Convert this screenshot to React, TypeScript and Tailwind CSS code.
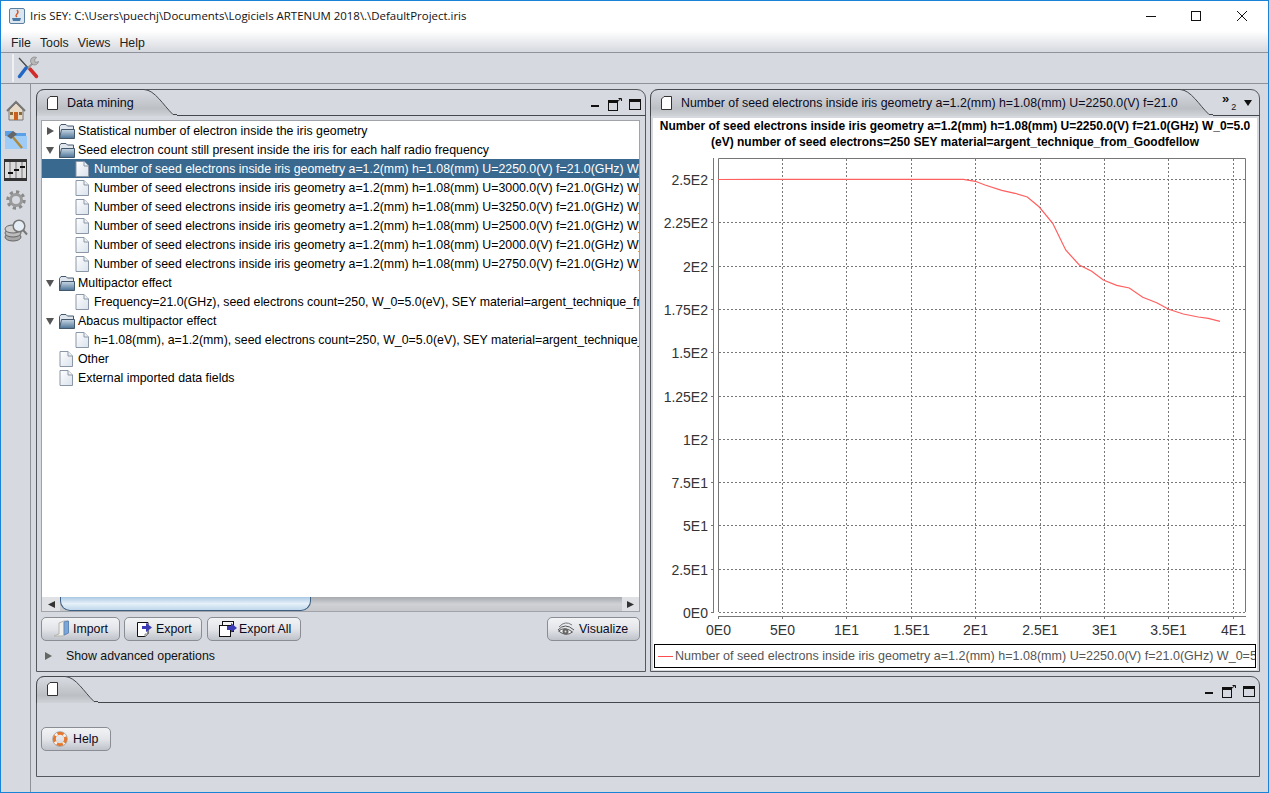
import React from "react";

const sans = { fontFamily: '"Liberation Sans", Arial, sans-serif' };

function DocIcon() {
  return (
    <svg width="14" height="16" viewBox="0 0 14 16" className="shrink-0">
      <defs>
        <linearGradient id="dg" x1="0" y1="0" x2="1" y2="1">
          <stop offset="0" stopColor="#ffffff" />
          <stop offset="1" stopColor="#d9e2ec" />
        </linearGradient>
      </defs>
      <path d="M1 .5H9L13.5 5V15.5H1Z" fill="url(#dg)" stroke="#8b97a6" />
      <path d="M9 .5V5H13.5" fill="#eef2f6" stroke="#8b97a6" />
    </svg>
  );
}

function TabDoc() {
  return (
    <svg width="11" height="14" viewBox="0 0 11 14" className="shrink-0">
      <path d="M3 .5H10.5V13.5H.5V3Z" fill="#fff" stroke="#333" />
    </svg>
  );
}

function Folder() {
  return (
    <svg width="17" height="15" viewBox="0 0 17 15" className="shrink-0">
      <defs>
        <linearGradient id="fg" x1="0" y1="0" x2="0" y2="1">
          <stop offset="0" stopColor="#c9d8e6" />
          <stop offset="1" stopColor="#4c7396" />
        </linearGradient>
      </defs>
      <path d="M1.5 14.5V2.5L3 .5H8L9.5 2H15.5V14.5Z" fill="#dfe6ee" stroke="#44586c" />
      <path d="M1.5 14.5L3.5 5.5H16.5V14.5Z" fill="url(#fg)" stroke="#44586c" />
    </svg>
  );
}

function Tri({ open = false, gray = false }: { open?: boolean; gray?: boolean }) {
  return (
    <svg width="8" height="8" viewBox="0 0 8 8" className="shrink-0">
      {open ? <path d="M0 1H8L4 8Z" fill="#555" /> : <path d="M1 0L8 4L1 8Z" fill={gray ? "#666" : "#555"} />}
    </svg>
  );
}

function Row({ indent, children, selected = false }: { indent: "leaf" | "plain"; children: string; selected?: boolean }) {
  return (
    <div
      className={`h-[19px] pt-[1px] flex items-center whitespace-nowrap overflow-hidden text-[12.35px] ${
        selected ? "bg-[#39698f] text-white" : "text-black"
      } ${indent === "leaf" ? "pl-[33px] gap-[5px]" : "pl-[17px] gap-[5px]"}`}
    >
      <DocIcon />
      <span>{children}</span>
    </div>
  );
}

function FolderRow({ open = false, children }: { open?: boolean; children: string }) {
  return (
    <div className="h-[19px] pt-[1px] flex items-center whitespace-nowrap overflow-hidden text-[12.35px] text-black pl-[4px]">
      <Tri open={open} />
      <span className="ml-[4px] mr-[3px] flex"><Folder /></span>
      <span>{children}</span>
    </div>
  );
}

function TabShape({ w }: { w: number }) {
  const h = 27;
  return (
    <svg width={w} height={h} viewBox={`0 0 ${w} ${h}`} className="absolute left-0 top-0">
      <defs>
        <linearGradient id="tab" x1="0" y1="0" x2="0" y2="1">
          <stop offset="0" stopColor="#d8dbe1" />
          <stop offset="0.72" stopColor="#bcbfc4" />
          <stop offset="1" stopColor="#d0d3d8" />
        </linearGradient>
      </defs>
      <path
        d={`M0 ${h}V9Q0 1 8 .5H${w - 33}C${w - 22} 1 ${w - 14} 16 ${w - 4} ${h - 1.5}H${w}V${h}H0Z`}
        fill="url(#tab)"
      />
      <path
        d={`M.5 ${h}V9Q.5 1 8 .5H${w - 33}C${w - 22} 1 ${w - 14} 16 ${w - 4} ${h - 1.5}H${w}`}
        fill="none"
        stroke="#44484c"
      />
    </svg>
  );
}

function WinButtons() {
  return (
    <div className="flex items-center">
      <svg width="9" height="13" viewBox="0 0 9 13"><rect x="0" y="7" width="8" height="2" fill="#111" /></svg>
      <svg width="14" height="13" viewBox="0 0 14 13" className="ml-[8px]">
        <rect x=".5" y="2.5" width="9" height="10" fill="none" stroke="#111" />
        <rect x="0" y="2" width="10" height="3" fill="#111" />
        <path d="M9 4L13 .5M10.5 .5H13.5V3" fill="none" stroke="#111" />
      </svg>
      <svg width="12" height="11" viewBox="0 0 12 11" className="ml-[7px]">
        <rect x=".5" y=".5" width="11" height="10" fill="#d6d9df" stroke="#111" />
        <rect x="0" y="0" width="12" height="3" fill="#111" />
      </svg>
    </div>
  );
}

function Btn({ icon, label, cls }: { icon: React.ReactNode; label: string; cls: string }) {
  return (
    <button
      style={sans}
      className={`h-[24px] flex items-center justify-start rounded-[5px] border border-[#8a8d93] bg-gradient-to-b from-[#f2f3f5] via-[#e3e5e9] to-[#bfc3ca] text-[12.35px] text-[#0a0a20] ${cls}`}
    >
      {icon}
      <span>{label}</span>
    </button>
  );
}

const ImportIcon = (
  <svg width="18" height="18" viewBox="0 0 18 18" className="mr-[2px] shrink-0">
    <path d="M1 16L6 14V3L11 1H15V13L10 16Z" fill="#f0efea" stroke="#b5b5b0" />
    <path d="M11 2L15.5 1V13L11 15Z" fill="#7ba6d8" stroke="#5f87b8" />
  </svg>
);
const ExportIcon = (
  <svg width="18" height="18" viewBox="0 0 18 18" className="mr-[2px] shrink-0">
    <path d="M1.5 2.5H12V14L9 16.5H1.5Z" fill="#fff" stroke="#111" />
    <path d="M9 16.5V14H12" fill="#ddd" stroke="#888" />
    <path d="M6 6H10V3L16 7.5L10 12V9H6Z" fill="#3b3bb5" />
  </svg>
);
const ExportAllIcon = (
  <svg width="20" height="18" viewBox="0 0 20 18" className="mr-[1px] shrink-0">
    <rect x="4.5" y="1.5" width="11" height="10" fill="#f4f4f4" stroke="#111" />
    <rect x="1.5" y="5.5" width="11" height="11" fill="#fff" stroke="#111" />
    <path d="M9 6H13V3L19 8L13 12.5V10H9Z" fill="#3b3bb5" />
  </svg>
);
const EyeIcon = (
  <svg width="18" height="16" viewBox="0 0 18 16" className="mr-[4px] shrink-0">
    <path d="M1 9Q8 1 17 9" fill="none" stroke="#555" />
    <path d="M2 6Q8 -1 15 4" fill="none" stroke="#777" />
    <path d="M1.5 10Q8 5 15.5 11Q9 16 1.5 10Z" fill="#f4f4f4" stroke="#555" />
    <circle cx="8.5" cy="10.5" r="3" fill="#666" />
    <circle cx="8.5" cy="10.5" r="1" fill="#ddd" />
  </svg>
);
const BuoyIcon = (
  <svg width="16" height="16" viewBox="0 0 16 16" className="mr-[5px] shrink-0">
    <circle cx="8" cy="8" r="5.7" fill="none" stroke="#e9772a" strokeWidth="3" />
    <circle cx="8" cy="8" r="5.7" fill="none" stroke="#f7efe8" strokeWidth="3" strokeDasharray="3 5.95" strokeDashoffset="1.5" transform="rotate(45 8 8)" />
    <circle cx="8" cy="8" r="7.4" fill="none" stroke="#8f8f8f" strokeWidth=".6" />
  </svg>
);

const xTicks = ["0E0", "5E0", "1E1", "1.5E1", "2E1", "2.5E1", "3E1", "3.5E1", "4E1"];
const yTicks = ["0E0", "2.5E1", "5E1", "7.5E1", "1E2", "1.25E2", "1.5E2", "1.75E2", "2E2", "2.25E2", "2.5E2"];
const curve = [
  [70, 58], [106, 64], [135, 75], [185, 91], [225, 100], [262, 111], [298, 141], [338, 190], [377, 270], [418, 315],
  [455, 334], [490, 360], [530, 376], [568, 384], [608, 412], [650, 428], [686, 448], [730, 462], [775, 471], [805, 475], [840, 484],
];
const curvePts =
  "718,179.5 " + curve.map(([x, y]) => `${(940 + x / 3).toFixed(1)},${(160 + y / 3).toFixed(1)}`).join(" ");

function Chart() {
  return (
    <svg width="602" height="494" viewBox="654 150 602 494" className="block shrink-0" style={sans}>
      <path d="M718.5 612V158.5H1245.5V612" fill="none" stroke="#777" />
      {xTicks.map((t, i) => {
        const x = Math.round(717.5 + i * 64.4) + 0.5;
        return (
          <g key={t}>
            {i > 0 && <line x1={x} x2={x} y1={159} y2={612} stroke="#777" strokeDasharray="2 2" />}
            <line x1={x} x2={x} y1={616} y2={619} stroke="#777" />
            <text x={x} y={635} textAnchor="middle" fontSize="14" fill="#333">{t}</text>
          </g>
        );
      })}
      {yTicks.map((t, i) => {
        const y = Math.round(612 - i * 43.3) + 0.5;
        return (
          <g key={t}>
            <line x1={719} x2={1245} y1={y} y2={y} stroke="#777" strokeDasharray="2 2" />
            <line x1={711} x2={714} y1={y} y2={y} stroke="#777" />
            <text x={708} y={y + 5} textAnchor="end" fontSize="14" fill="#333">{t}</text>
          </g>
        );
      })}
      <line x1="713.5" x2="713.5" y1="158" y2="613" stroke="#777" />
      <line x1="718" x2="1246" y1="616.5" y2="616.5" stroke="#777" />
      <polyline points={curvePts} fill="none" stroke="#ff5f5f" strokeWidth="1.2" />
    </svg>
  );
}

const seed = (u: string) =>
  `Number of seed electrons inside iris geometry a=1.2(mm) h=1.08(mm) U=${u}(V) f=21.0(GHz) W_0=5.0(eV) number of seed electrons=250`;

const TabLine = ({ left }: { left: string }) => <div className={`absolute ${left} right-0 top-[26px] h-px bg-[#44484c]`} />;

export default function App() {
  return (
    <div
      style={sans}
      className="w-[1269px] h-[793px] overflow-hidden flex flex-col bg-[#d6d9df] border border-[#1883d7] text-black"
    >
      {/* Title bar */}
      <div className="h-[30px] shrink-0 bg-white flex items-center pl-[8px]" style={{ fontFamily: '"Open Sans", sans-serif' }}>
        <svg width="16" height="16" viewBox="0 0 16 16" className="shrink-0">
          <rect x=".5" y=".5" width="15" height="15" rx="1.5" fill="#dbe6f0" stroke="#5c7f9f" />
          <path d="M8 2Q10 4 8 6T8 9" fill="none" stroke="#d9531e" strokeWidth="1.3" />
          <path d="M3 10H12L11 13H4Z" fill="#4a7ba8" />
        </svg>
        <span className="ml-[5px] text-[11.45px] text-[#111] whitespace-nowrap">
          Iris SEY: C:\Users\puechj\Documents\Logiciels ARTENUM 2018\.\DefaultProject.iris
        </span>
        <div className="ml-auto flex items-center text-black mr-[3px]">
          <svg width="46" height="30" viewBox="0 0 46 30"><path d="M19 15.5H29" stroke="#111" /></svg>
          <svg width="46" height="30" viewBox="0 0 46 30"><rect x="18.5" y="10.5" width="9" height="9" fill="none" stroke="#111" /></svg>
          <svg width="46" height="30" viewBox="0 0 46 30"><path d="M18 10L28 20M28 10L18 20" stroke="#111" /></svg>
        </div>
      </div>
      {/* Menu */}
      <div className="h-[22px] shrink-0 bg-gradient-to-b from-white to-[#d6d9df] border-b border-[#8f9399] flex items-center pl-[10px] pt-[3px] gap-[9px] text-[12.35px] text-[#222]">
        <span>File</span><span>Tools</span><span>Views</span><span>Help</span>
      </div>
      {/* Toolbar */}
      <div className="h-[31px] shrink-0 border-b border-[#8f9399] flex items-center pl-[11px]">
        <div className="w-[2px] h-[28px] bg-[#eef0f3]" />
        <svg width="24" height="24" viewBox="0 0 24 24" className="ml-[2px]">
          <path d="M3 2L14 14" stroke="#444" strokeWidth="1.2" />
          <path d="M14 13L20.5 20.5" stroke="#d12b2b" strokeWidth="3.5" strokeLinecap="round" />
          <path d="M18 6L11 13" stroke="#999" strokeWidth="2" />
          <path d="M10 12L3.5 20.5" stroke="#2368c4" strokeWidth="3.5" strokeLinecap="round" />
          <path d="M20.5 1.5A4 4 0 1 0 22.5 5.5L19.5 6.5L18.5 4Z" fill="#b8b8b8" stroke="#777" strokeWidth=".6" />
        </svg>
      </div>
      {/* Body */}
      <div className="flex-1 flex min-h-0">
        {/* Sidebar */}
        <div className="w-[30px] shrink-0 border-r border-[#8f9399] flex flex-col items-center pt-[11px]">
          <div className="h-[30px] flex items-center justify-center">
            <svg width="20" height="21" viewBox="0 0 20 21">
              <path d="M3 10V20H17V10L10 3Z" fill="#e8dcc8" stroke="#777" />
              <path d="M1 11L10 2L19 11" fill="none" stroke="#777" strokeWidth="2" />
              <rect x="8" y="12" width="4" height="8" fill="#c9601e" />
              <rect x="4" y="12" width="3" height="3" fill="#8a6a3a" />
              <rect x="13" y="12" width="3" height="3" fill="#8a6a3a" />
            </svg>
          </div>
          <div className="h-[30px] flex items-center justify-center">
            <svg width="24" height="22" viewBox="0 0 24 22">
              <path d="M1 2H9L11 4H22V19H1Z" fill="#5aa0e8" />
              <path d="M1 7H23V20H1Z" fill="#9fccf7" />
              <path d="M8 7L18 19" stroke="#b08a3c" strokeWidth="2.5" />
              <path d="M3 7L9 2L13 5L7 10Z" fill="#666" />
            </svg>
          </div>
          <div className="h-[30px] flex items-center justify-center">
            <svg width="23" height="22" viewBox="0 0 23 22">
              <rect x=".5" y=".5" width="22" height="21" fill="#dcdcdc" stroke="#333" />
              <rect x="0" y="0" width="23" height="3" fill="#333" />
              <rect x="0" y="19" width="23" height="3" fill="#333" />
              <path d="M6 3V19M12 3V19M18 3V19" stroke="#777" />
              <rect x="4" y="13" width="5" height="2" fill="#111" />
              <rect x="10" y="10" width="5" height="2" fill="#111" />
              <rect x="16" y="7" width="5" height="2" fill="#111" />
            </svg>
          </div>
          <div className="h-[30px] flex items-center justify-center">
            <svg width="20" height="20" viewBox="0 0 20 20">
              <circle cx="10" cy="10" r="5.5" fill="none" stroke="#9a9a9a" strokeWidth="3" />
              <circle cx="10" cy="10" r="8.2" fill="none" stroke="#8a8a8a" strokeWidth="3" strokeDasharray="3.2 3.2" />
            </svg>
          </div>
          <div className="h-[30px] flex items-center justify-center">
            <svg width="24" height="23" viewBox="0 0 24 23">
              <ellipse cx="9" cy="18" rx="8" ry="4" fill="#a8a8a8" stroke="#666" />
              <ellipse cx="9" cy="14" rx="8" ry="4" fill="#bdbdbd" stroke="#666" />
              <ellipse cx="9" cy="10" rx="8" ry="4" fill="#d0d0d0" stroke="#666" />
              <circle cx="15" cy="7" r="5.8" fill="#e6eef5" stroke="#777" strokeWidth="1.5" />
              <path d="M19 11L23 15.5" stroke="#777" strokeWidth="2" />
            </svg>
          </div>
        </div>
        {/* Content */}
        <div className="flex-1 min-w-0 flex flex-col pl-[5px] pr-[8px] pt-[5px] pb-[15px] gap-[4px]">
          <div className="h-[583px] shrink-0 flex gap-[4px]">
            {/* Left panel */}
            <section className="w-[610px] shrink-0 relative flex flex-col border border-[#55595e] rounded-t-[9px]">
              <div className="h-[31px] shrink-0 relative -mx-[1px] -mt-[1px]">
                <TabShape w={141} />
                <TabLine left="left-[141px]" />
                <div className="relative h-[28px] flex items-center pl-[11px] gap-[9px] text-[12.5px] text-[#0a0a20]">
                  <TabDoc />
                  <span>Data mining</span>
                </div>
                <div className="absolute right-[5px] top-[9px]"><WinButtons /></div>
              </div>
              <div className="ml-[4px] mr-[5px] h-[477px] shrink-0 bg-white border-x border-t border-[#a0a4aa] overflow-hidden">
                <FolderRow>Statistical number of electron inside the iris geometry</FolderRow>
                <FolderRow open>Seed electron count still present inside the iris for each half radio frequency</FolderRow>
                <Row indent="leaf" selected>{seed("2250.0")}</Row>
                <Row indent="leaf">{seed("3000.0")}</Row>
                <Row indent="leaf">{seed("3250.0")}</Row>
                <Row indent="leaf">{seed("2500.0")}</Row>
                <Row indent="leaf">{seed("2000.0")}</Row>
                <Row indent="leaf">{seed("2750.0")}</Row>
                <FolderRow open>Multipactor effect</FolderRow>
                <Row indent="leaf">Frequency=21.0(GHz), seed electrons count=250, W_0=5.0(eV), SEY material=argent_technique_from_Goodfellow</Row>
                <FolderRow open>Abacus multipactor effect</FolderRow>
                <Row indent="leaf">h=1.08(mm), a=1.2(mm), seed electrons count=250, W_0=5.0(eV), SEY material=argent_technique_from_Goodfellow</Row>
                <Row indent="plain">Other</Row>
                <Row indent="plain">External imported data fields</Row>
              </div>
              {/* Scrollbar */}
              <div className="ml-[4px] mr-[5px] h-[15px] shrink-0 flex bg-gradient-to-b from-[#a6a9ae] via-[#cfd1d5] to-[#c6c8cc] border-x border-b border-[#a0a4aa]">
                <div className="w-[18px] shrink-0 flex items-center justify-center bg-[#dfe1e5]">
                  <svg width="7" height="7" viewBox="0 0 7 7"><path d="M7 0V7L0 3.5Z" fill="#333" /></svg>
                </div>
                <div className="w-[251px] shrink-0 rounded-b-[10px] border-x border-b border-[#3f5f80] bg-gradient-to-b from-[#a9c8e4] via-[#e6f0f8] to-[#c0d8ec]" />
                <div className="flex-1" />
                <div className="w-[17px] shrink-0 flex items-center justify-center bg-[#dfe1e5]">
                  <svg width="7" height="7" viewBox="0 0 7 7"><path d="M0 0V7L7 3.5Z" fill="#333" /></svg>
                </div>
              </div>
              <div className="ml-[4px] mr-[5px] mt-[5px] flex gap-[4px]">
                <Btn icon={ImportIcon} label="Import" cls="w-[79px] pl-[11px]" />
                <Btn icon={ExportIcon} label="Export" cls="w-[78px] pl-[11px]" />
                <Btn icon={ExportAllIcon} label="Export All" cls="w-[94px] ml-[1px] pl-[10px]" />
                <Btn icon={EyeIcon} label="Visualize" cls="w-[93px] ml-auto pl-[9px]" />
              </div>
              <div className="flex items-center h-[16px] mt-[7px] pl-[7px] text-[12.35px] text-[#111]">
                <Tri gray />
                <span className="ml-[14px]">Show advanced operations</span>
              </div>
            </section>
            {/* Right panel */}
            <section className="flex-1 min-w-0 relative flex flex-col border border-[#55595e] rounded-t-[9px]">
              <div className="h-[29px] shrink-0 relative -mx-[1px] -mt-[1px]">
                <TabShape w={563} />
                <TabLine left="left-[563px]" />
                <div className="relative h-[28px] flex items-center pl-[11px] gap-[9px] text-[12.35px] text-[#0a0a20] whitespace-nowrap">
                  <TabDoc />
                  <span className="w-[497px] overflow-hidden">{seed("2250.0")}</span>
                </div>
                <div className="absolute left-[572px] top-[3px] flex items-start text-[#111]">
                  <span className="text-[13px] leading-[14px] font-bold">»</span>
                  <span className="text-[9px] mt-[9px] ml-[2px]">2</span>
                  <svg width="8" height="6" viewBox="0 0 8 6" className="ml-[8px] mt-[8px]"><path d="M0 0H8L4 6Z" fill="#111" /></svg>
                </div>
              </div>
              <div className="mx-[2px] mb-[1px] flex-1 bg-white flex flex-col px-[1px] min-h-0">
                <div className="text-[12px] leading-[16px] font-bold text-center text-black whitespace-nowrap h-[32px] shrink-0 overflow-hidden">
                  <div>Number of seed electrons inside iris geometry a=1.2(mm) h=1.08(mm) U=2250.0(V) f=21.0(GHz) W_0=5.0</div>
                  <div>(eV) number of seed electrons=250 SEY material=argent_technique_from_Goodfellow</div>
                </div>
                <Chart />
                <div className="h-[24px] shrink-0 border border-black flex items-center pl-[3px] text-[12.55px] text-[#555] whitespace-nowrap overflow-hidden">
                  <div className="w-[15px] h-[1px] bg-[#ff4d4d] shrink-0 mr-[2px]" />
                  <span>{seed("2250.0")}</span>
                </div>
              </div>
            </section>
          </div>
          {/* Bottom panel */}
          <section className="flex-1 relative border border-[#55595e] rounded-t-[9px]">
            <div className="h-[27px] relative -mx-[1px] -mt-[1px]">
              <TabShape w={62} />
              <TabLine left="left-[62px]" />
              <div className="relative h-[26px] flex items-center pl-[11px]"><TabDoc /></div>
              <div className="absolute right-[5px] top-[9px]"><WinButtons /></div>
            </div>
            <div className="pl-[4px] pt-[24px]">
              <Btn icon={BuoyIcon} label="Help" cls="w-[70px] pl-[10px]" />
            </div>
          </section>
        </div>
      </div>
    </div>
  );
}
